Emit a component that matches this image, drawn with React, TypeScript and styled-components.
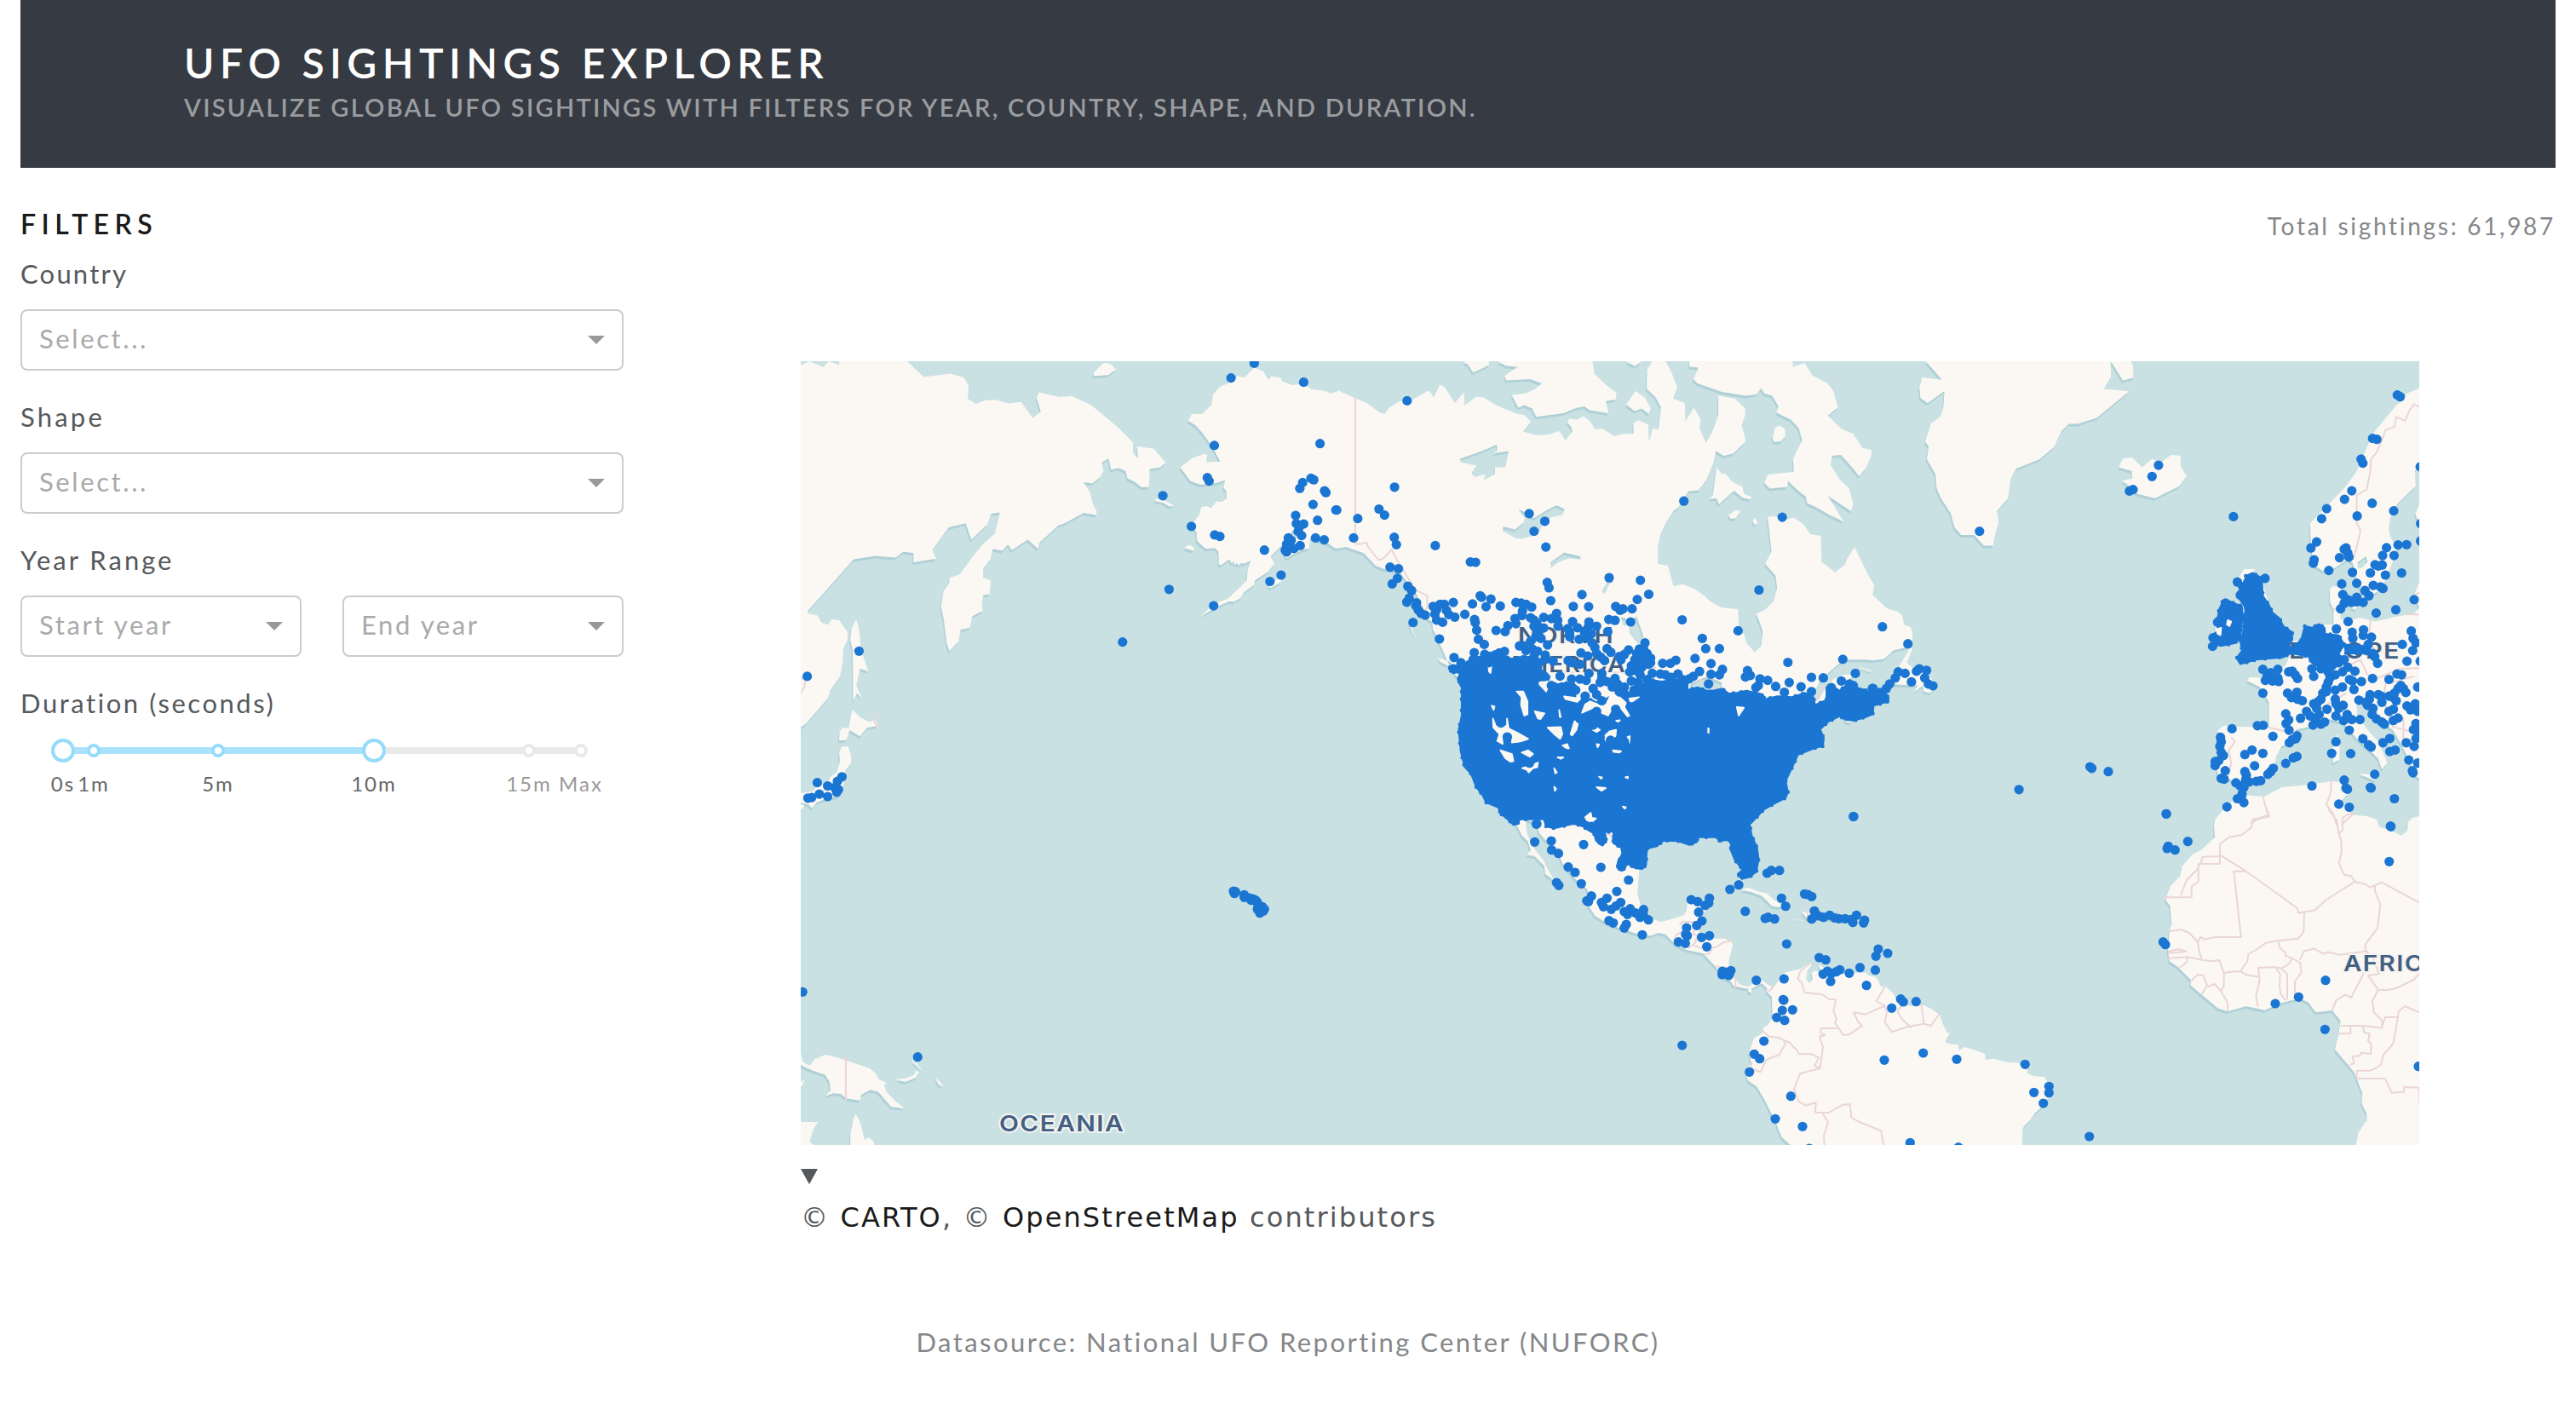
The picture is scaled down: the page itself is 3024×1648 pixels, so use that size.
import React from "react";
import styled, { createGlobalStyle } from "styled-components";

const GlobalStyle = createGlobalStyle`
  *, *::before, *::after { box-sizing: border-box; }
  body {
    margin: 0;
    background: #fff;
    color: #55595c;
    font-family: Lato, "Noto Sans", sans-serif;
    font-size: 31px;
    letter-spacing: 2px;
  }
`;

/* ---------- map data ---------- */

type Frame = [number, number, number, number];

// Each survey sheet: origin x, origin y, units per pixel on x and y.
const SHEETS: Record<string, Frame> = {
  a: [930, 410, 2.45, 2.8],
  b: [1560, 410, 2.45, 2.8],
  c: [2190, 410, 2.3758, 2.8],
  d: [1660, 740, 2.6133, 3],
  e: [930, 950, 2.45, 3],
  f: [1900, 950, 3, 3],
  g: [2370, 950, 3, 3],
};

const MAP_X = 940;
const MAP_Y = 424;
const MAP_W = 1900;
const MAP_H = 920;

const project = (sheet: string, text: string): [number, number][] => {
  const [ox, oy, sx, sy] = SHEETS[sheet];
  return text
    .trim()
    .split(/\s+/)
    .map((pair) => {
      const [x, y] = pair.split(",").map(Number);
      return [
        Math.round((ox + x / sx - MAP_X) * 10) / 10,
        Math.round((oy + y / sy - MAP_Y) * 10) / 10,
      ] as [number, number];
    });
};

type Part = [string, string];

const line = (...parts: Part[]) =>
  "M" + parts.flatMap(([s, t]) => project(s, t)).map((p) => p.join(",")).join("L");
const ring = (...parts: Part[]) => line(...parts) + "Z";

const americas = ring(
  ["a", "1229,124 1262,108 1280,88 1301,92 1329,60 1354,72 1370,101 1377,90 1405,93 1408,105 1438,118 1468,114 1495,132 1535,137 1549,146 1568,138"],
  ["b", "28,136 65,155 110,177 145,207 160,213 175,190 205,170 240,165 288,135 301,158 319,117 332,123 362,176 389,141 390,184 423,156 445,158 480,183 540,212 562,216 581,238 559,270 597,283 632,280 662,269 681,300 700,270 697,255 685,240 692,228 715,231 732,219 750,235 766,264 787,260 820,286 845,279 876,277 876,242 890,233 919,248 920,304 931,262 948,262 955,190 938,155 914,130 915,70 930,39 968,39 985,75 1002,125 990,162 1024,177 1025,238 1050,192 1069,230 1066,262 1085,308 1105,265 1120,215 1120,153 1168,162 1197,195 1197,217 1187,250 1197,288 1197,306 1162,343 1135,350 1113,334 1105,375 1085,430 1064,463 1035,466 1020,490 1005,520 992,530 965,580 953,612 946,650 946,705 975,711 991,779 1018,772 1055,790 1083,813 1100,832 1130,849 1176,854 1180,915 1195,940 1201,966 1225,996 1243,975 1248,930 1240,900 1229,870 1255,855 1278,830 1289,785 1285,745 1255,705 1273,665 1262,552 1280,548 1310,560 1338,553 1365,575 1385,608 1415,613 1417,700 1425,705 1455,733 1484,708 1490,690 1512,650 1550,740 1568,775"],
  ["c", "24,780 20,808 60,852 90,862 102,875 108,905 125,912 131,930 130,970 118,978 78,990 52,1018 20,1022 0,1020"],
  ["b", "1500,1020 1478,1022 1440,1060 1410,1095 1395,1130 1390,1165 1410,1150 1430,1110 1450,1085 1480,1070 1514,1068 1490,1090 1500,1110 1540,1140 1560,1160 1530,1190 1500,1228 1488,1225 1475,1200 1420,1225"],
  ["d", "1240,340 1160,430 1040,660 1010,820 980,740 960,700 740,730 700,800 691,840 685,930 697,975 720,1010 757,1027 800,1013 827,1003 834,990 838,960 900,950 895,985 880,1010 880,1040 870,1070 900,1085 950,1085 975,1095 977,1110 965,1165 966,1182"],
  ["f", "388,552 392,580 412,600 430,618 458,625 468,618 485,590 510,605 530,620 545,628 585,575 640,562 677,538 680,548 665,570 660,595 670,613 683,600 680,575 695,568 712,575 705,545 720,555 760,580 830,577 870,575 880,585 905,590 918,608 920,622 942,625 970,650 975,665 992,690 1030,692 1075,690 1100,702 1130,722 1142,755 1155,782 1166,790 1150,818 1160,825 1197,829 1198,850 1218,837 1240,843 1290,860 1293,882 1320,878 1367,890 1405,892 1440,915"],
  ["g", "30,930 55,940 90,942 100,960 110,990 100,1020 85,1045 55,1070 40,1095 18,1115 12,1130 12,1200"],
  ["f", "605,1200 605,1182 575,1155 562,1125 556,1105 540,1075 510,1015 485,975 455,955 450,935 448,920 468,895 460,858 462,845 478,805 505,790 510,770 525,760 542,735 540,660 520,640 525,632 505,612 490,620 468,632 470,645 455,642 458,632 405,622 395,605 355,585 352,570 343,555 305,515 300,508 240,495 200,475 165,440 140,435 115,445 75,443"],
  ["d", "690,1070 640,1052 590,1030 555,1005 535,970 540,940 530,910 490,870 470,840 455,820 440,780 410,745 400,735 385,715 378,690 362,672 345,668 343,690 348,720 370,770 400,815 405,830 425,870 430,880 402,857 400,830 370,795 345,790 358,775 350,745 330,720 312,680 250,600 180,500 150,400 150,180 135,170 110,130 90,75 60,0"],
  ["b", "300,925 297,895 285,888 275,860 250,800 235,780 212,745 205,735 190,728 160,722 135,712 100,670 50,650 20,655 0,640"],
  ["a", "1520,630 1490,620 1486,655 1470,658 1440,675 1420,688 1415,665 1432,640 1456,610 1440,595 1405,648 1376,680 1386,705 1370,730 1330,760 1328,775 1300,798 1290,818 1270,830 1257,828 1225,845 1190,868 1174,878 1190,862 1215,835 1253,820 1307,760 1310,725 1318,695 1300,705 1292,702 1283,712 1280,703 1272,708 1268,695 1265,706 1257,690 1235,708 1227,708 1226,665 1215,653 1190,656 1164,630 1163,603 1149,575 1170,545 1177,518 1192,515 1205,522 1220,500 1235,502 1249,490 1248,465 1240,455 1245,430 1220,440 1175,445 1145,433 1116,388 1150,358 1182,344 1193,345 1191,371 1231,369 1215,335 1195,300 1180,275 1160,250 1139,235 1149,213 1180,212 1205,183 1210,150"]
);

const africa = ring(
  ["c", "975,1545 1000,1510 1035,1470 1055,1465 1112,1470 1160,1440 1240,1430 1300,1420 1340,1425 1345,1460 1325,1490 1355,1520 1360,1530 1400,1535 1425,1545"],
  ["g", "1270,62 1310,75 1348,92 1367,75 1370,45 1385,30 1410,24 1430,24 1430,1200 1182,1200 1195,1140 1225,1095 1225,1072 1207,1035 1210,1000 1190,950 1180,925 1113,845 1125,795 1133,745 1103,708 1045,715 1020,680 990,665 930,680 865,707 800,693 735,712 700,700 605,620 605,600 560,555 530,535 525,495 530,430 537,405 533,340 517,320 520,305 535,270 567,235 575,200 610,160 640,145 690,100 687,60"]
);

const rings = (sheet: string, list: string[]) => list.map((t) => ring([sheet, t])).join("");

const LAND = [
  americas,
  africa,
  rings("a", [
    "0,60 24,53 50,40 90,58 105,40 135,50 135,39 330,39 378,91 455,80 493,92 507,118 505,162 528,179 555,168 585,166 622,178 658,173 692,226 715,204 703,160 709,141 768,157 805,154 860,183 938,258 980,306 980,341 994,358 992,319 1040,327 1074,372 1058,388 1028,393 1026,453 1004,453 985,435 964,424 959,400 938,390 917,396 910,358 890,372 895,400 886,420 863,441 838,436 856,470 865,510 875,530 875,545 838,538 784,572 766,578 711,636 706,655 678,626 631,660 621,642 604,662 577,656 570,690 549,722 549,750 571,760 568,805 550,808 545,835 548,860 518,877 511,915 484,922 478,960 452,993 444,965 436,890 428,845 435,795 451,770 453,750 482,740 520,680 550,638 582,607 597,536 572,540 561,576 515,626 499,572 450,585 403,660 414,688 349,700 349,670 320,665 297,685 240,679 177,690 45,860 45,868 73,875 84,898 102,906 114,888 135,890 159,929 159,955 147,985 145,1030 137,1077 109,1122 102,1148 40,1230 24,1243 0,1250",
    "184,888 190,910 195,945 196,975 203,1005 219,1058 195,1050 184,1105 201,1148 187,1130 175,1155 174,990 167,955 170,920",
    "173,1184 195,1210 222,1225 240,1216 245,1238 215,1244 195,1272 165,1252 156,1284 135,1286 136,1260 143,1245 162,1245 168,1205",
    "143,1306 161,1305 169,1335 169,1360 153,1385 150,1410 145,1450 130,1470 90,1480 70,1490 57,1508 45,1495 24,1490 0,1490 0,1460 30,1458 60,1452 70,1438 100,1428 110,1405 128,1390 137,1355 135,1325",
    "24,1495 35,1498 28,1513 24,1513",
    "895,45 915,48 931,66 910,84 867,88 868,75",
    "1045,490 1075,500 1097,512 1085,517 1065,503 1045,500",
    "1127,652 1142,643 1156,652 1155,662 1140,658",
    "1370,778 1385,765 1395,755 1410,748 1405,765 1376,785",
  ]),
  rings("b", [
    "385,39 460,39 460,52 415,77 400,50",
    "485,39 758,39 763,80 800,120 827,142 825,165 797,170 804,210 750,200 735,188 710,193 675,210 596,222 585,195 562,183 545,192 526,150 565,145 590,133 613,112 578,98 510,102 505,88 543,58 510,55",
    "855,39 900,39 880,56",
    "882,137 910,160 925,195 920,213 900,195 880,203 855,182",
    "1037,39 1037,57 1063,60 1048,98 1060,112 1130,140 1200,153 1230,148 1243,128 1252,145 1275,153 1293,188 1287,208 1330,232 1352,260 1361,300 1335,360 1337,403 1262,412 1253,440 1268,458 1318,452 1320,432 1345,460 1372,485 1375,505 1400,518 1440,545 1480,566 1435,482 1502,532 1508,508 1495,455 1470,430 1443,380 1447,350 1473,347 1510,395 1525,417 1545,390 1560,350 1561,330 1535,325 1508,278 1475,262 1435,218 1464,190 1450,135 1432,110 1390,85 1368,45 1335,58 1333,39",
    "1115,388 1130,410 1140,408 1160,435 1190,452 1193,475 1216,485 1210,493 1190,488 1165,465 1150,480 1122,510 1115,490 1095,492 1104,480",
    "1295,250 1312,262 1313,285 1300,303 1280,305 1276,290 1282,260",
    "1168,530 1185,530 1170,555 1155,557 1150,545",
    "1225,553 1233,570 1225,578 1219,565",
    "230,898 240,905 240,925 255,955 238,925",
    "315,1015 345,1025 370,1045 345,1040 320,1028",
    "1520,1042 1560,1056 1562,1060 1540,1052",
    // lakes
    "377,360 440,335 483,313 484,332 474,342 517,335 507,387 478,388 477,410 445,431 450,410 420,420 410,408 425,382 380,372",
    "545,525 563,535 590,555 625,530 655,512 678,525 672,545 640,552 615,575 605,600 590,612 555,623 540,622 500,598 501,582 535,592 560,570 563,555",
    "638,700 677,668 722,680 725,690 690,687 660,700 638,720",
    "800,745 815,735 815,765 805,775 793,805 785,795 798,770",
    "885,878 890,895 905,945 890,970 865,935 862,900",
    "840,880 855,885 855,910 845,905",
    "1040,1100 1065,1085 1090,1075 1130,1095 1130,1110 1090,1125 1060,1110 1035,1125",
  ]),
  rings("c", [
    "168,39 213,100 185,97 158,92 150,125 153,160 173,177 220,137 217,190 208,222 182,245 166,303 176,320 171,362 195,410 198,455 208,485 238,540 248,585 267,610 303,610 330,645 355,645 363,600 371,570 366,532 397,490 405,425 420,392 485,362 525,322 547,268 567,245 592,245 645,225 735,138 665,130 685,90 683,39",
    "684,39 740,39 746,55 747,93 718,103",
    "706,388 717,360 743,355 771,388 800,360 820,375 853,347 879,350 878,383 895,417 875,450 807,490 757,475 740,455 716,432 743,425 743,400",
    "125,980 131,985 115,1030 130,1045 150,1055 170,1060 185,1085 200,1105 180,1130 162,1125 160,1105 135,1128 145,1105 85,1102 80,1090 95,1040",
    "1544,128 1510,145 1500,165 1480,185 1413,280 1395,330 1370,400 1340,450 1300,500 1262,545 1240,572 1242,650 1250,710 1275,728 1310,718 1345,690 1358,700 1365,725 1370,760 1385,800 1410,808 1430,795 1450,760 1470,700 1475,665 1495,650 1475,640 1463,615 1459,590 1467,530 1490,500 1534,450 1532,400 1545,380 1560,380 1560,120",
    "1372,700 1396,680 1400,700 1385,718 1373,720",
    "1544,510 1533,540 1544,575 1560,575 1560,510",
    "1300,780 1325,778 1330,800 1322,830 1315,855 1325,870 1325,888 1350,890 1380,882 1420,895 1475,880 1530,868 1545,850 1530,808 1544,765 1560,765 1560,1420 1530,1400 1515,1350 1495,1300 1470,1250 1430,1215 1400,1180 1385,1150 1370,1170 1370,1200 1400,1250 1430,1290 1445,1330 1455,1360 1440,1380 1430,1345 1400,1310 1370,1280 1345,1245 1330,1225 1290,1215 1260,1235 1200,1250 1190,1290 1160,1305 1145,1340 1140,1370 1115,1405 1060,1418 1040,1430 1010,1410 985,1405 975,1360 985,1310 988,1260 980,1255 1000,1236 1040,1240 1125,1243 1125,1160 1100,1110 1065,1090 1070,1078 1110,1080 1170,1040 1180,1015 1225,990 1235,930 1260,905 1305,905 1305,855 1295,830 1295,790",
    "1040,755 1055,722 1086,722 1078,745 1105,760 1130,860 1150,900 1170,950 1140,1000 1050,1020 1060,900 1045,800",
    "990,830 1040,850 1045,940 975,970 975,900",
    "1305,1305 1322,1300 1322,1350 1303,1360",
    "1318,1262 1315,1295 1305,1285",
    "1376,1395 1430,1398 1420,1418",
    "1350,845 1372,845 1365,856",
  ]),
  rings("f", [
    "430,283 455,275 500,292 520,295 555,325 580,340 560,345 540,340 505,305 470,292",
    "645,358 665,365 690,360 760,375 830,385 800,392 720,385 680,385 665,388",
    "610,388 640,389 660,392 640,391",
  ]),
  rings("e", [
    "0,840 24,855 30,888 50,903 65,880 95,864 110,868 150,882 222,912 240,930 247,948 273,965 265,970 270,993 290,1020 310,1040 322,1052 285,1048 265,1020 248,995 225,988 198,1005 195,1025 155,1018 140,1002 118,1000 95,1010 110,990 107,960 95,935 60,920 40,910 24,900 0,900",
    "297,950 325,948 350,935 357,920 365,925 355,945 325,960",
    "340,882 358,895 378,925 372,918",
    "412,945 425,960 435,977 420,968",
    "480,992 507,1012 490,1000",
    "182,1072 195,1100 208,1165 220,1155 235,1170 235,1200 167,1200 167,1140 175,1095",
    "24,1100 74,1102 60,1130 50,1170 65,1185 65,1200 0,1200 0,1100",
    "24,960 36,952 30,970 24,980",
  ]),
].join("");

const lines = (sheet: string, list: string[]) => list.map((t) => line([sheet, t])).join("");

const BORDERS = [
  lines("a", ["243,1190 236,1225 248,1243", "24,1080 36,1085 36,1108 24,1130"]),
  lines("b", [
    "76,155 76,640 90,640 108,635 113,650 143,693 160,685 180,658 195,690 248,790 283,810 283,850 265,870",
    "470,1062 880,1062 905,1050 940,1045",
    "1065,1085 1118,1118",
    "1395,1165 1410,1130 1425,1105",
  ]),
  lines("c", [
    "1544,190 1530,180 1515,205 1505,235 1480,222 1475,255 1450,265 1440,300 1425,340 1410,360 1408,400 1398,460 1370,480 1370,570 1380,595 1370,650 1360,690",
    "1300,850 1325,860",
    "1408,888 1405,930 1425,1010",
    "1345,1040 1380,1020 1400,1070 1430,1080 1490,1050 1544,1048",
    "1505,870 1544,872",
    "1545,800 1530,808",
    "1125,1243 1170,1255 1190,1250",
    "1020,1275 1030,1290 1012,1320 1020,1360 1010,1410",
    "1270,1180 1340,1130",
    "1445,1150 1450,1100 1530,1075",
    "1445,1150 1470,1240 1530,1260",
    "1107,1465 1115,1500 1125,1530 1100,1540 1080,1545 1080,1560",
    "1300,1415 1297,1460 1285,1495 1305,1530 1315,1568",
    "1355,1522 1330,1540 1330,1568",
    "1500,1210 1500,1300",
  ]),
  lines("d", ["460,683 545,690 560,720 600,718 615,740"]),
  lines("e", ["154,868 154,1026"]),
  lines("f", [
    "677,540 640,570 632,598 645,610 655,645 718,652 740,668 765,670 757,710 768,740 762,750 775,770 712,772 712,788 727,795 708,800 720,838 710,912 690,902 705,875 680,862 635,862 630,850 600,820 560,803 530,800 507,780",
    "775,770 792,795 812,793 858,762 845,750 828,715 870,722 918,700 938,692 908,675 920,655 930,640 938,618",
    "938,692 945,715 938,750 962,784 1020,765 1030,768 1000,740 985,718 985,705 1000,690",
    "1020,765 1075,755 1067,690",
    "1075,755 1100,762 1130,720",
    "578,810 588,825 565,865 520,882 500,925 465,912 470,890",
    "710,912 640,930 618,985 635,1030 660,1043 695,1032 693,1067 740,1068 790,1040 815,1038 820,1085 850,1102 925,1132 933,1182",
    "718,1068 738,1102 723,1150 725,1182",
    "540,615 540,632 525,642",
    "412,590 412,630",
    "215,408 225,395 280,397",
    "265,425 265,440 280,445",
    "195,462 205,440 230,430",
    "245,490 270,470 275,450",
    "265,480 300,490 345,485 370,468 403,463",
    "305,510 320,508 330,490",
    "343,553 385,558",
    "668,345 665,385",
  ]),
  lines("g", [
    "870,0 883,25 850,32 820,45 820,62 785,90 740,98 708,122 708,192 632,192 632,255 608,272 608,310 517,310 517,322",
    "708,165 648,167 640,190 625,215 590,250 570,303",
    "708,160 800,218 935,315 980,348 985,365 1043,355 1080,320 1183,255 1170,235 1145,230 1127,190 1136,150 1135,110 1127,85 1120,40 1090,0",
    "1127,85 1140,75 1140,50 1173,20 1173,0",
    "1183,255 1220,263 1237,275 1277,257 1410,328",
    "800,218 757,218 780,430 783,450 690,450 655,458 640,450 630,468 600,435 570,423 530,430",
    "630,468 635,500 645,530 595,520 525,525",
    "525,500 560,493 590,500 525,507",
    "1005,365 1003,430 985,455 912,463 870,470 835,495 808,510 805,535 780,570 745,572 722,577 705,530 680,535 645,530",
    "912,463 920,490 940,505 938,515 963,525 990,540 995,575 972,605 972,672",
    "963,525 950,545 925,560 900,555 843,558 848,600 835,660 842,695",
    "780,570 800,582 843,590",
    "925,560 945,580 945,670",
    "905,560 920,580 918,620 922,650 938,672",
    "990,530 1003,500 1040,490 1070,508 1090,503 1130,512 1220,500 1220,475 1263,418 1273,335 1255,290 1253,265",
    "1215,575 1190,625 1170,663 1150,652 1118,672 1103,708",
    "1220,495 1250,530 1268,580 1230,585 1265,635 1245,675 1250,715 1280,745 1278,770 1215,762 1133,762",
    "1265,635 1295,637 1330,630 1390,600 1410,578",
    "1278,770 1290,732 1335,732 1337,712 1360,693 1410,715",
    "1335,732 1318,825 1283,865 1275,900 1240,920 1190,920 1190,948 1290,948 1313,998 1355,995 1357,978 1410,980 1410,1035",
    "1127,790 1168,790 1168,762",
    "1212,765 1215,785 1235,790 1230,815 1240,825 1240,862 1205,857 1200,868 1175,870 1180,895 1165,900",
    "722,577 722,620 712,640 735,680 735,712",
    "605,605 630,582 650,585 663,620 645,650",
    "665,625 690,615 712,640",
    "595,520 590,540 565,558",
  ]),
].join("");

const DENSE = [
  rings("d", [
    "110,130 140,120 170,110 185,90 210,100 220,80 250,75 270,90 300,100 330,95 370,95 380,130 400,150 415,165 410,185 440,190 470,185 500,195 505,220 520,240 545,245 575,262 590,240 640,235 660,225 665,200 700,190 730,175 760,180 800,172 840,185 838,210 870,200 905,215 945,205 965,222 990,220 1020,212 1070,225 1075,242 1115,232 1160,235 1200,220 1225,235 1230,262 1265,245 1265,200 1285,190 1300,215 1330,190 1355,200 1385,210 1405,225 1425,210 1455,230 1455,250 1410,265 1407,295 1385,305 1350,317 1325,315 1305,302 1270,322 1246,348 1257,380 1254,408 1235,412 1178,437 1165,470 1140,530 1147,570 1140,590 1105,610 1072,632 1030,683 1035,720 1052,765 1057,805 1050,850 1030,868 1005,875 993,858 1008,842 985,810 972,775 972,750 960,735 940,743 925,728 870,728 868,745 845,755 810,742 765,740 745,760 715,768 713,795 712,825 700,840 680,838 655,822 640,845 622,830 628,805 640,790 635,765 612,750 610,730 612,708 585,710 590,745 575,755 558,740 552,715 530,700 518,690 490,680 455,690 430,697 405,690 398,665 370,665 320,665 322,680 305,685 292,670 260,640 262,625 220,605 210,580 190,550 175,505 155,480 143,425 137,350 146,300 146,200 135,180 140,150 110,145",
  ]),
  rings("c", [
    "1060,745 1080,735 1095,745 1105,750 1108,810 1125,840 1135,865 1155,885 1165,910 1190,930 1190,955 1180,975 1185,1000 1165,1012 1090,1020 1045,1035 1035,1015 1050,990 1045,960 1055,920 1055,890 1060,850 1040,815 1040,795 1055,790",
    "995,830 1015,828 1050,845 1052,880 1045,940 1035,965 990,975 970,960 965,940 985,925 980,905 985,860",
    "1225,910 1245,915 1265,903 1280,915 1282,935 1320,940 1335,970 1320,1000 1330,1030 1290,1060 1265,1045 1245,1030 1235,1010 1190,1000 1183,985 1200,970 1215,955",
    "1335,970 1385,975 1390,1000 1340,1000",
  ]),
].join("");

const GAPS = [
  rings("d", [
    "315,215 335,215 348,250 348,295 338,300 328,262 330,235",
    "370,285 400,292 388,312 380,310",
    "242,310 250,335 265,345 285,335 285,310 290,345 320,362 350,382 330,390 300,395 302,370 285,358 270,378 272,400 255,390 262,365 243,342",
    "265,422 300,435 305,460 295,462 280,450",
    "330,430 350,422 365,435 355,445",
    "332,485 352,478 370,470 380,465 378,482 365,485 352,500 345,490",
    "410,342 450,340 455,365 448,382 430,365",
    "480,365 492,320 505,318 498,350 485,370",
    "545,330 570,350 560,358 548,350",
    "582,375 600,355 620,350 618,372 600,385 590,390",
    "515,290 525,260 540,250 575,265 590,258 600,235 630,235 650,255 645,270 660,300 655,303 635,275 620,262 605,280 595,300 575,290 558,272 545,275",
    "660,240 690,235 670,250 664,250",
    "385,183 410,180 425,182 415,190 405,215 385,190",
    "460,232 510,240 500,252 465,242",
    "500,195 540,190 545,220 500,240",
    "565,205 585,195 590,215 570,230",
    "455,405 470,400 475,415 468,415",
    "560,400 568,402 563,412",
    "610,422 635,425 630,430 612,428",
    "440,447 458,447 450,452",
    "430,485 438,500 433,503",
    "560,552 588,555 575,565",
    "525,658 542,642 545,660 558,662 545,675 530,668",
    "640,620 650,622 647,628",
    "430,550 436,558 432,565",
    "568,515 577,518 573,522",
    "648,517 656,515 656,521",
    "655,375 662,372 660,395",
    "445,280 450,305 447,305",
    "620,318 632,316 626,322",
    "238,265 247,268 244,280",
    "228,122 237,125 235,150 230,145",
    "990,270 1012,272 996,300",
    "902,345 904,345 904,360 902,360",
  ]),
  rings("c", ["1010,890 1020,895 1015,910 1008,905", "978,920 992,915 990,940 982,935"]),
].join("");

const SIGHTINGS: [number, number][] = [
  ...project("a", "1329,46 1262,94 1471,108 1214,316 1518,310 1194,422 1199,433 1492,424 1500,429 1468,438 1460,457 1531,465 1535,471 1498,510 1566,528 1448,546 1511,562 1450,573 1471,574 1458,585 1455,598 1465,612 1505,620 1530,626 1427,620 1435,628 1422,640 1418,660 1422,666 1443,655 1461,645 1066,481 1148,582 1215,610 1230,615 1358,660 1406,742 1374,763 1084,789 1212,843 950,962 192,992 43,1075 143,1405 72,1424 102,1435 130,1420 122,1440 133,1447 128,1456 78,1462 102,1470 45,1475 56,1473"),
  ...project("b", "225,169 189,453 20,528 83,556 144,525 160,545 188,618 194,642 71,620 306,645 407,699 422,700 576,540 621,565 590,598 624,650 1021,499 1304,552 1237,791 176,716 200,721 197,753 182,771 227,779 238,793 231,818 224,831 252,833 250,843 257,857 277,874 265,868 242,898 318,952 300,845 320,838 332,838 310,855 338,858 305,870 310,890 327,897 345,872 362,880 358,832 391,871 413,837 435,810 439,815 466,821 452,846 493,844 419,888 421,898 425,923 430,953 447,970 481,924 507,928 515,908 538,902 535,885 538,832 553,834 567,838 583,847 557,860 555,875 580,882 590,890 598,900 590,910 600,925 618,916 595,945 610,950 580,960 560,975 548,975 585,985 567,990 600,992 629,972 628,766 633,784 638,826 618,881 640,885 655,868 658,890 659,910 728,806 703,845 747,846 806,751 896,759 920,805 887,822 825,845 838,858 846,853 872,853 805,888 823,891 868,896"),
  ...project("b", "701,895 715,915 687,918 692,935 693,945 748,896 745,915 770,910 735,930 755,935 802,928 720,953 745,948 757,965 765,980 800,984 811,996 725,998 745,1008 770,1000 782,1012 793,1023 688,1023 700,1030 722,1035 645,1025 622,1005 625,1018 505,993 490,998 495,1015 470,1010 448,1003 418,997 415,1020 460,1030 360,1013 380,1030 358,1050 400,1040 385,1080 862,988 850,1003 840,1020 835,1010 885,1000 893,985 909,965 905,985 915,1000 925,1015 900,1015 880,1020 870,1040 865,1060 880,1055 900,1045 920,1035 895,1070 915,1085 930,1065 890,1095 870,1090 900,1030 885,1035 925,1030 545,1025 535,1040 560,1020 575,1030 590,1010 605,1030 600,1045 960,1032 982,1032 998,1022 953,1067 968,1070 985,1078 1004,1067 1017,1085 1036,1083 1048,1075 1066,1059 1053,1016 1099,1033 1099,1068 1132,1052 1123,1070 1092,1100 1084,984 1123,984 1074,950 1177,925 1016,889 1204,1056 1198,1077 1212,1072 1240,1083 1262,1088 1235,1105 1228,1112 1285,1108 1324,1095 1310,1127 1358,1109 1388,1125 1388,1078 1422,1080 1320,1029 1478,1019 1514,1065 1474,1090 1497,1100 1508,1105 1445,1112 1565,1115"),
  ...project("b", "665,1074 698,1084 722,1084 740,1088 748,1065 785,1065 785,1080 780,1095 823,1082 830,1100 850,1110 760,1115 770,1135 785,1155 737,1140 825,1183 710,1120 690,1120 640,1105 670,1110 815,1110 835,1125 850,1132 880,1120 800,1092 620,1075 513,1274 577,1360 495,1228 480,1305 770,1190 760,1235 722,1215 810,1285 850,1290 780,1275 705,1200 1509,1536 598,1560"),
  ...project("c", "47,912 118,968 150,1050 142,1058 170,1055 165,1080 175,1100 188,1106 128,1093 110,1065 91,1060 83,1080 67,1100 58,1115 19,1115 40,1128 52,1148 35,1152 25,1140 10,1160 5,1175 8,1190 20,1150"),
  ...project("c", "1483,150 1491,156 1414,293 1426,296 1382,361 1387,374 1356,465 1336,493 1413,506 1286,524 1272,557 1371,548 1473,531 1547,386 1258,633 1242,653 1251,692 1249,703 1292,727 1340,653 1335,657 1345,670 1322,685 1348,683 1453,652 1442,678 1474,678 1485,643 1509,642 1548,573 1548,630 1421,708 1441,709 1430,712 1408,735 1450,742 1495,735 1358,733 1328,771 1370,769 1416,776 1436,781 1443,786 1393,793 1404,810 1331,806 1370,815 1340,820 1335,835 1325,853 1355,832 1388,832 1370,830 1350,825 1424,867 1479,856 1530,823 1346,895 1313,919 1357,930 1359,950 1389,922 1388,940 1411,946 1402,970 1397,990 1415,1000 1420,1010 1428,1032 1522,926 1527,950 1535,965 1497,970 1526,990 1510,1025 1547,1025 318,598 1026,550 817,381 799,418 736,466 746,461 626,1372 631,1377 677,1388 428,1447 839,1527 1037,765 1114,753 1052,780 1045,808 1004,834 982,897 969,948 968,976"),
  ...project("c", "1108,1052 1150,1052 1130,1063 1120,1075 1115,1088 1135,1090 1150,1080 1152,1092 1108,1130 1180,1060 1190,1058 1205,1082 1198,1070 1177,1130 1203,1127 1188,1145 1205,1150 1218,1155 1172,1198 1180,1218 1173,1230 1181,1252 1213,1213 1230,1190 1240,1205 1250,1165 1262,1158 1270,1150 1258,1180 1265,1200 1255,1215 1248,1235 1270,1232 1280,1225 1287,1183 1275,1130 1285,1110 1290,1095 1295,1080 1310,1070 1330,1060 1345,1045 1290,1060 1270,1050 1250,1075 1245,1050 1300,1040 1320,1030 1335,1020 1280,1025 1285,1125 1310,1120 1330,1110 1362,1118 1350,1085 1358,1090 1365,1058 1383,1092 1414,1082 1460,1085 1482,1067 1495,1070 1310,1150 1312,1165 1332,1170 1320,1180 1312,1205 1343,1200 1333,1220 1356,1217 1379,1217 1349,1252 1376,1153 1395,1160 1407,1135 1405,1150 1400,1170 1430,1135 1438,1140 1440,1160 1415,1180 1413,1200 1425,1215 1440,1225 1447,1232 1460,1140 1472,1145 1480,1155 1475,1130 1485,1115 1493,1105 1500,1115 1507,1128 1472,1183 1460,1190 1485,1212 1472,1220 1540,1110 1510,1172 1520,1185 1533,1165 1540,1190 1545,1180 1535,1230 1528,1250 1540,1260 1535,1280 1545,1245 1530,1305 1508,1293 1515,1350 1525,1385 1527,1392 1540,1360"),
  ...project("c", "1462,1279 1443,1293 1387,1280 1403,1300 1410,1307 1462,1322 1477,1317 1312,1290 1300,1328 1353,1329 1420,1397 1410,1442 1408,1440 1475,1477 1464,1567 1335,1416 1340,1442 1344,1446 1320,1495 1349,1505 1245,1435 1203,1270 1200,1280 1190,1283 1182,1293 1203,1338 1193,1343 1172,1361 1136,1272 1093,1237 1109,1236 1022,1247 990,1275 992,1290 988,1305 992,1325 998,1335 975,1355 985,1352 975,1368 1003,1385 992,1410 1000,1413 1078,1317 1058,1332 1108,1328 1085,1369 1058,1388 1062,1400 1060,1415 1033,1425 1045,1435 1055,1440 1070,1422 1090,1420 1102,1418 1122,1397 1130,1388 1137,1377 1050,1462 1037,1477 1055,1490 1048,1475 1008,1504"),
  ...project("d", "370,745 421,741 422,773 443,785 520,754 473,833 494,852 573,834 513,892 437,888 444,898 658,879 636,832 622,919 544,935 535,955 530,952 592,943 575,958 581,973 634,958 620,970 605,982 645,990 663,980 655,1000 680,995 704,983 693,1010 703,1000 719,1019 598,1022 611,1030 651,1035 645,1048 700,1072 375,682 310,668 545,690 575,740 575,725 850,948 870,955 906,943 904,960 893,968 873,992 883,1023 867,1039 836,1047 833,1070 838,1075 811,1097 832,1102 882,1081 906,1075 898,1114 946,1200 945,1212 957,1205 965,1215 972,1198 968,1208 1050,1232 1135,1227 969,912 996,896 1083,855 1096,845 1121,845 1127,943 1140,971 1016,989 1077,1014 1086,1010 1106,1016 1198,928 1208,930 1220,937 1143,1104 1348,655 1228,988 1232,1000 1220,1016 1240,1005 1256,1010 1275,1003 1290,1012 1303,1015 1322,1015 1340,1018 1346,1028 1357,1003 1382,1020 1379,1030 1424,1122 1417,1147 1453,1137 1243,1152 1263,1160 1368,1187 1415,1196 1255,1210 1268,1200 1280,1208 1295,1202 1306,1195 1335,1207 1278,1236 1388,1250"),
  ...project("e", "361,872 30,643 1269,288 1275,290 1272,296 1300,301 1300,310 1315,312 1320,320 1325,315 1333,320 1338,328 1340,340 1338,352 1352,343 1346,352 1358,352 1355,358 1345,365"),
  ...project("f", "580,670 582,672 577,708 613,706 557,733 585,743 512,816 478,862 497,878 461,925 607,1010 552,1090 648,1117 224,831 936,883 1073,858 1191,880 962,700 994,668 1003,678 1048,677 1027,1174 1197,1190 672,1194"),
  ...project("g", "519,16 595,113 526,130 522,138 550,143 508,467 516,476 1310,61 1304,184 1080,602 985,661 903,684 1078,775 1407,905 53,997 106,976 106,998 86,1035 248,1152 22,898"),
];

/* ---------- page ---------- */

const Page = styled.div`
  display: flex;
  flex-direction: column;
  min-height: 1648px;
  padding: 0 24px;
`;

const Header = styled.header`
  height: 197px;
  padding: 44px 192px 0;
  background: #363a42;
  text-transform: uppercase;
`;

const Title = styled.h1`
  margin: 0;
  font-size: 48px;
  line-height: 60px;
  font-weight: 600;
  letter-spacing: 6.4px;
  color: #fff;
`;

const Subtitle = styled.p`
  margin: 0;
  font-size: 29px;
  line-height: 44px;
  font-weight: 600;
  letter-spacing: 2.26px;
  color: #9a9da0;
`;

const Columns = styled.div`
  display: flex;
  gap: 48px;
`;

const Sidebar = styled.aside`
  display: flex;
  flex-direction: column;
  width: 708px;
  padding-top: 38px;
`;

const Heading = styled.h5`
  margin: 0;
  font-size: 32px;
  line-height: 56px;
  font-weight: 600;
  letter-spacing: 6.4px;
  color: #1a1a1a;
  text-transform: uppercase;
`;

const Field = styled.div`
  display: flex;
  flex-direction: column;
  gap: 12px;
  margin-bottom: 24px;
`;

const Label = styled.label<{ $track: number }>`
  line-height: 60px;
  letter-spacing: ${(p) => p.$track}px;
`;

const SelectRow = styled.div`
  display: flex;
  gap: 48px;
`;

const SelectBox = styled.div`
  display: flex;
  flex: 1 0 auto;
  align-items: center;
  justify-content: space-between;
  height: 72px;
  padding: 0 20px 4px;
  border: 2px solid #ccc;
  border-radius: 8px;
  letter-spacing: 2.6px;
  color: #aaa;
`;

const SplitSelect = styled.div`
  flex: 1 1 0;
  min-width: 0;
`;

const Caret = styled.span`
  border: 10px solid transparent;
  border-top-color: #999;
  border-bottom-width: 0;
  margin-top: 4px;
`;

const Slider = styled.div`
  position: relative;
  height: 80px;
  margin: -24px 50px 0;
`;

const Rail = styled.div<{ $fill?: boolean }>`
  position: absolute;
  top: 22px;
  left: 0;
  width: ${(p) => (p.$fill ? "365px" : "608px")};
  height: 8px;
  border-radius: 4px;
  background: ${(p) => (p.$fill ? "#abe2fb" : "#e9e9e9")};
`;

const Dot = styled.span<{ $at: number; $active: boolean; $handle?: boolean }>`
  position: absolute;
  left: ${(p) => p.$at}px;
  top: 26px;
  width: ${(p) => (p.$handle ? 28 : 16)}px;
  height: ${(p) => (p.$handle ? 28 : 16)}px;
  border: 4px solid ${(p) => (p.$active ? "#96dbfa" : "#e9e9e9")};
  border-radius: 50%;
  background: #fff;
  transform: translate(-50%, -50%);
`;

const Mark = styled.span<{ $at: number; $active: boolean }>`
  position: absolute;
  left: ${(p) => p.$at}px;
  top: 50px;
  font-size: 24px;
  line-height: 30px;
  letter-spacing: 2px;
  color: ${(p) => (p.$active ? "#666" : "#999")};
  transform: translateX(-50%);
  white-space: nowrap;
`;

const Main = styled.main`
  display: flex;
  flex: 1;
  flex-direction: column;
  align-items: center;
`;

const Total = styled.div`
  align-self: flex-end;
  margin-top: 38px;
  font-size: 28px;
  line-height: 60px;
  letter-spacing: 2.7px;
  color: #84878a;
`;

const MapFigure = styled.figure`
  width: ${MAP_W}px;
  margin: 129px 0 0;
`;

const MapSvg = styled.svg`
  display: block;
  background: #c9e1e3;
`;

const Toggle = styled.span`
  display: block;
  width: 0;
  margin: 28px 0 0;
  border: 10.5px solid transparent;
  border-top: 18px solid #55595c;
  border-bottom-width: 0;
`;

const Attribution = styled.figcaption`
  margin-top: 14px;
  font-family: Verdana, "DejaVu Sans", sans-serif;
  font-size: 32px;
  line-height: 50px;
  letter-spacing: 2.12px;
`;

const Credit = styled.a`
  color: #1a1a1a;
`;

const Footer = styled.footer`
  margin-top: 91px;
  line-height: 60px;
  letter-spacing: 2.43px;
  text-align: center;
  color: #84878a;
`;

const marks = [
  { at: 0, text: "0s", handle: true },
  { at: 36, text: "1m" },
  { at: 182, text: "5m" },
  { at: 365, text: "10m", handle: true },
  { at: 547, text: "15m" },
  { at: 608, text: "Max" },
];

const continents = [
  { text: "NORTH", x: 842, y: 331, w: 113 },
  { text: "AMERICA", x: 829, y: 365, w: 140 },
  { text: "EUROPE", x: 1747, y: 349, w: 131 },
  { text: "AFRICA", x: 1811, y: 716, w: 117 },
  { text: "OCEANIA", x: 233, y: 904, w: 147 },
];

const Select = ({ children }: { children: string }) => (
  <SelectBox>
    <span>{children}</span>
    <Caret />
  </SelectBox>
);

const SightingsMap = () => (
  <MapSvg width={MAP_W} height={MAP_H} viewBox={`0 0 ${MAP_W} ${MAP_H}`}>
    <path d={LAND} fill="#afd0d7" fillRule="evenodd" transform="translate(-1.2 3)" />
    <path d={LAND} fill="#fbf8f3" fillRule="evenodd" />
    <path d={BORDERS} fill="none" stroke="#ead5d7" strokeWidth="2" strokeLinejoin="round" />
    <g
      fontFamily="Inter, sans-serif"
      fontSize="26"
      fontWeight="600"
      fill="#426083"
      stroke="#f6f4f0"
      strokeWidth="4"
      paintOrder="stroke"
      strokeLinejoin="round"
      letterSpacing="1.2"
    >
      {continents.map((c) => (
        <text key={c.text} x={c.x} y={c.y} textLength={c.w} lengthAdjust="spacingAndGlyphs">
          {c.text}
        </text>
      ))}
    </g>
    <path d={DENSE} fill="#1b76d3" stroke="#1b76d3" strokeWidth="2" strokeLinejoin="round" />
    <path
      d={DENSE}
      fill="none"
      stroke="#1b76d3"
      strokeWidth="4.5"
      strokeLinecap="round"
      strokeDasharray="0 13 0 9 0 17"
    />
    <path d={GAPS} fill="#fbf8f3" stroke="#fbf8f3" strokeWidth="1.8" strokeLinejoin="round" />
    <g fill="#1b76d3">
      {SIGHTINGS.map(([x, y], i) => (
        <circle key={i} cx={x} cy={y} r="5.6" />
      ))}
    </g>
  </MapSvg>
);

export default function App() {
  return (
    <>
      <GlobalStyle />
      <Page>
        <Header>
          <Title>UFO Sightings Explorer</Title>
          <Subtitle>
            Visualize global UFO sightings with filters for year, country, shape, and duration.
          </Subtitle>
        </Header>
        <Columns>
          <Sidebar>
            <Heading>Filters</Heading>
            <Field>
              <Label $track={2.2}>Country</Label>
              <Select>Select...</Select>
            </Field>
            <Field>
              <Label $track={3.2}>Shape</Label>
              <Select>Select...</Select>
            </Field>
            <Field>
              <Label $track={3}>Year Range</Label>
              <SelectRow>
                <SplitSelect>
                  <Select>Start year</Select>
                </SplitSelect>
                <SplitSelect>
                  <Select>End year</Select>
                </SplitSelect>
              </SelectRow>
            </Field>
            <Field>
              <Label $track={2.55}>Duration (seconds)</Label>
            </Field>
            <Slider>
              <Rail />
              <Rail $fill />
              {marks.map((m) => (
                <React.Fragment key={m.text}>
                  <Dot $at={m.at} $active={m.at <= 365} $handle={m.handle} />
                  <Mark $at={m.at} $active={m.at <= 365}>
                    {m.text}
                  </Mark>
                </React.Fragment>
              ))}
            </Slider>
          </Sidebar>
          <Main>
            <Total>Total sightings: 61,987</Total>
            <MapFigure>
              <SightingsMap />
              <Toggle />
              <Attribution>
                © <Credit>CARTO</Credit>, © <Credit>OpenStreetMap</Credit> contributors
              </Attribution>
            </MapFigure>
          </Main>
        </Columns>
        <Footer>Datasource: National UFO Reporting Center (NUFORC)</Footer>
      </Page>
    </>
  );
}
